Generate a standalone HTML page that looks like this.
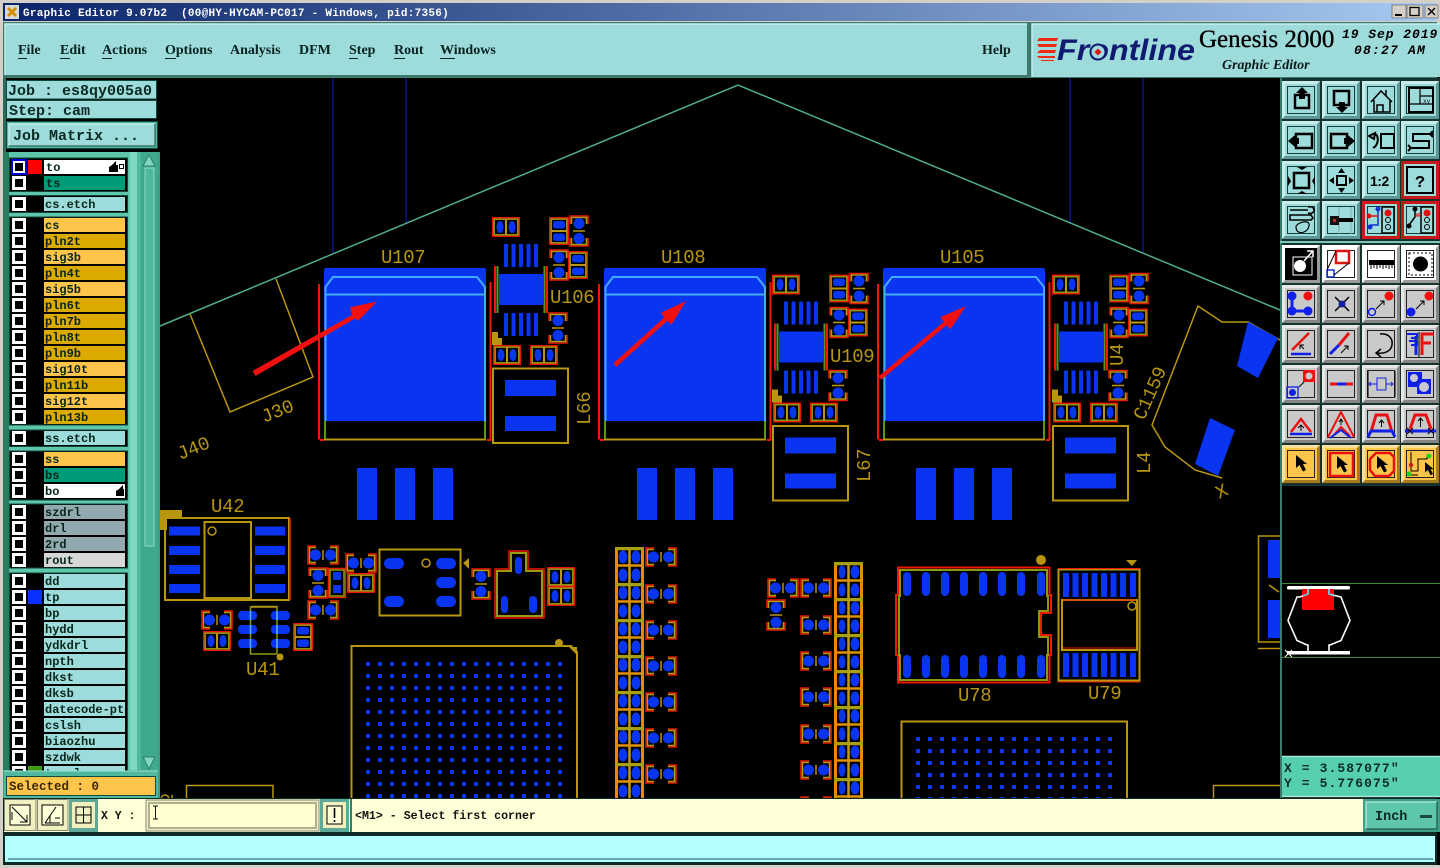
<!DOCTYPE html>
<html lang="en"><head><meta charset="utf-8"><title>Graphic Editor</title>
<style>
html,body{margin:0;padding:0;width:1440px;height:868px;overflow:hidden;background:#000}
svg{display:block}
.l{font:bold 12px "Liberation Mono",monospace;fill:#05261c}
.m{font:bold 14px "Liberation Serif",serif;fill:#06231f}
.j{font:bold 15px "Liberation Mono",monospace;fill:#0a2a24}
.g{font:19px "Liberation Mono",monospace;fill:#b8960f;letter-spacing:-.3px}
</style></head><body>
<svg xmlns="http://www.w3.org/2000/svg" width="1440" height="868" viewBox="0 0 1440 868">
<defs>
<linearGradient id="tg" x1="0" x2="1" y1="0" y2="0"><stop offset="0" stop-color="#0a246a"/><stop offset="1" stop-color="#a6caf0"/></linearGradient>
<pattern id="bga" patternUnits="userSpaceOnUse" x="366" y="662" width="12" height="12"><rect width="4" height="4" fill="#0a35f0"/></pattern>
<pattern id="bgb" patternUnits="userSpaceOnUse" x="916" y="737" width="12" height="12"><rect width="4" height="4" fill="#0a35f0"/></pattern>
<pattern id="lad1" patternUnits="userSpaceOnUse" x="615" y="547" width="29" height="36">
<rect width="29" height="36" fill="#000"/>
<path d="M1.500 0V36M27.500 0V36" stroke="#e88a00" stroke-width="3"/><path d="M14.500 0V36" stroke="#c09a10" stroke-width="2.500"/>
<path d="M0 1.500H29" stroke="#a8a010" stroke-width="3.500"/><path d="M0 18.500H29" stroke="#e09000" stroke-width="2.500"/>
<ellipse cx="8" cy="10" rx="4.500" ry="6.500" fill="#0a35f0"/><ellipse cx="21" cy="10" rx="4.500" ry="6.500" fill="#0a35f0"/>
<ellipse cx="8" cy="28" rx="4.500" ry="6.500" fill="#0a35f0"/><ellipse cx="21" cy="28" rx="4.500" ry="6.500" fill="#0a35f0"/></pattern>
<pattern id="lad2" patternUnits="userSpaceOnUse" x="834" y="562" width="29" height="36">
<rect width="29" height="36" fill="#000"/>
<path d="M1.500 0V36M27.500 0V36" stroke="#e88a00" stroke-width="3"/><path d="M14.500 0V36" stroke="#c09a10" stroke-width="2.500"/>
<path d="M0 1.500H29" stroke="#a8a010" stroke-width="3.500"/><path d="M0 18.500H29" stroke="#e09000" stroke-width="2.500"/>
<ellipse cx="8" cy="10" rx="3.500" ry="6.500" fill="#0a35f0"/><ellipse cx="21" cy="10" rx="4.500" ry="6.500" fill="#0a35f0"/>
<ellipse cx="8" cy="28" rx="3.500" ry="6.500" fill="#0a35f0"/><ellipse cx="21" cy="28" rx="4.500" ry="6.500" fill="#0a35f0"/></pattern>

<g id="capH"><path d="M9 1H1V19H9M23 1H31V19H23" fill="none" stroke="#f01800" stroke-width="1.500"/><path d="M9 2.500H2.500V17.500H9M23 2.500H29.500V17.500H23" fill="none" stroke="#b09a10" stroke-width="1.500"/><circle cx="8.500" cy="10" r="5.500" fill="#0a35f0"/><circle cx="23.500" cy="10" r="5.500" fill="#0a35f0"/><path d="M16 5V15" stroke="#b8960f" stroke-width="1.500"/></g>
<g id="capV"><path d="M1 9V1H19V9M1 23V31H19V23" fill="none" stroke="#f01800" stroke-width="1.500"/><path d="M2.500 9V2.500H17.500V9M2.500 23V29.500H17.500V23" fill="none" stroke="#b09a10" stroke-width="1.500"/><circle cx="10" cy="8.500" r="5.500" fill="#0a35f0"/><circle cx="10" cy="23.500" r="5.500" fill="#0a35f0"/><path d="M4 16H16" stroke="#b8960f" stroke-width="1.500"/></g>
<g id="chipH"><rect x=".8" y=".8" width="26.400" height="18.400" fill="#000" stroke="#f01800" stroke-width="1.500"/><rect x="2.200" y="2.200" width="23.600" height="15.600" fill="none" stroke="#8a9a10" stroke-width="1.500"/><path d="M14 2V18" stroke="#b8960f" stroke-width="2"/><ellipse cx="8" cy="10" rx="3.500" ry="6" fill="#0a35f0"/><ellipse cx="20" cy="10" rx="3.500" ry="6" fill="#0a35f0"/></g>
<g id="chipV"><rect x=".8" y=".8" width="18.400" height="26.400" fill="#000" stroke="#f01800" stroke-width="1.500"/><rect x="2.200" y="2.200" width="15.600" height="23.600" fill="none" stroke="#8a9a10" stroke-width="1.500"/><path d="M2 14H18" stroke="#b8960f" stroke-width="2"/><rect x="4" y="4" width="12" height="7.500" rx="2.500" fill="#0a35f0"/><rect x="4" y="16.500" width="12" height="7.500" rx="2.500" fill="#0a35f0"/></g>

<g id="mod">
<rect x="324" y="268" width="162" height="153" fill="#0a35f0" rx="2"/>
<path d="M325.500 421V287L333 277H477L485 287V421M325 294.500H485" fill="none" stroke="#44aaff" stroke-width="2"/>
<path d="M325 421V439M485 421V439" stroke="#5a9a10" stroke-width="2"/>
<path d="M324 439.500H486" stroke="#b8960f" stroke-width="2"/>
<path d="M319 439.500V284M320 440H324M490.500 440V282M487 440H491" fill="none" stroke="#f01800" stroke-width="2"/>
<rect x="357" y="468" width="20" height="52" fill="#0a35f0"/><rect x="395" y="468" width="20" height="52" fill="#0a35f0"/><rect x="433" y="468" width="20" height="52" fill="#0a35f0"/>
</g>

<g id="grp">
<use href="#chipH" x="492" y="217"/>
<use href="#chipV" x="549" y="217"/>
<use href="#capV" x="569" y="215"/>
<use href="#capV" x="549" y="249"/>
<use href="#chipV" x="568" y="251"/>
<use href="#capV" x="548" y="312"/>
<path d="M506 244V267M513.500 244V267M521 244V267M528.500 244V267M536 244V267M506 313V336M513.500 313V336M521 313V336M528.500 313V336M536 313V336" stroke="#0a35f0" stroke-width="4"/>
<rect x="499" y="274" width="44" height="31" fill="#0a35f0"/>
<path d="M495 266V313M547 266V313" stroke="#f01800" stroke-width="2"/>
<path d="M497.500 266V313M544.500 266V313" stroke="#5a9a10" stroke-width="2"/>
<path d="M492 332H498V338H502V345H492Z" fill="#b8960f"/>
<use href="#chipH" x="493" y="345"/><use href="#chipH" x="530" y="345"/>
<rect x="493" y="368.500" width="75" height="74.500" fill="none" stroke="#b8960f" stroke-width="2"/>
<rect x="505" y="380" width="51" height="16" fill="#0a35f0"/><rect x="505" y="416" width="51" height="15" fill="#0a35f0"/>
</g>

<g id="c"><rect x="13.500" y="1.500" width="11" height="11" fill="#000" stroke="#fff" stroke-width="3"/></g>
<g id="ar"><path d="M0 0V13L3.500 10L7 16.500L10 15L7 9H11Z" fill="#000"/></g>

<g id="bt"><rect width="38" height="38" fill="#9edbdb"/><path d="M0 38V0H38L35 3H3V35Z" fill="#c8ecec"/><path d="M38 0V38H0L3 35H35V3Z" fill="#5b9797"/><rect x="5.500" y="5.500" width="27" height="27" fill="none" stroke="#14403c"/></g>
<g id="bg"><rect width="38" height="38" fill="#c9c9c9"/><path d="M0 38V0H38L35 3H3V35Z" fill="#e8e8e8"/><path d="M38 0V38H0L3 35H35V3Z" fill="#858585"/><rect x="5.500" y="5.500" width="27" height="27" fill="none" stroke="#222"/></g>
<g id="bw"><rect width="38" height="38" fill="#fff"/><path d="M38 0V38H0L3 35H35V3Z" fill="#9a9a9a"/><rect x="5.500" y="5.500" width="27" height="27" fill="none" stroke="#222"/></g>
<g id="bo"><rect width="38" height="38" fill="#ffc44a"/><path d="M0 38V0H38L35 3H3V35Z" fill="#ffe09a"/><path d="M38 0V38H0L3 35H35V3Z" fill="#a87a20"/><rect x="5.500" y="5.500" width="27" height="27" fill="none" stroke="#222"/></g>
</defs>

<!-- canvas -->
<rect width="1440" height="868" fill="#000"/>
<path d="M333 78V253M406 78V223M1070 78V223M1143 78V253" stroke="#0a20c8" stroke-width="1"/>
<path d="M160 326L738 85L1280 310" fill="none" stroke="#4fae86" stroke-width="1.500"/>
<path d="M190 314L230 412L313 377L276 279" fill="none" stroke="#b8960f" stroke-width="1.500"/>

<use href="#mod"/><use href="#mod" x="280"/><use href="#mod" x="559"/>
<use href="#grp"/><use href="#grp" x="280" y="57.500"/><use href="#grp" x="560" y="57.500"/>

<text class="g" x="381" y="263">U107</text><text class="g" x="661" y="263">U108</text><text class="g" x="940" y="263">U105</text>
<text class="g" x="550" y="303">U106</text><text class="g" x="830" y="362">U109</text>
<text class="g" transform="translate(1123,366) rotate(-90)">U4</text>
<text class="g" transform="translate(590,425) rotate(-90)">L66</text>
<text class="g" transform="translate(870,482) rotate(-90)">L67</text>
<text class="g" transform="translate(1150,474) rotate(-90)">L4</text>
<text class="g" transform="translate(264,423) rotate(-22)">J30</text>
<text class="g" transform="translate(180,460) rotate(-22)">J40</text>
<text class="g" transform="translate(1144,421) rotate(-66)">C1159</text>
<text class="g" transform="translate(1219,499) rotate(-25)">X</text>

<!-- red arrows -->
<g fill="#f01010">
<path d="M252.500 371L352 315L350 307.300L377 301.500L358.300 320.700L355 318.500L255.500 376Z"/>
<path d="M613.500 363.300L664.500 317.300L660.600 313L686 301L671.400 325L667.500 320.700L616.500 366.700Z"/>
<path d="M878.600 376.300L943.900 321.700L940.200 317.300L966 306L950.400 329.500L946.700 325.100L881.400 379.700Z"/>
</g>

<!-- right component -->
<path d="M1280 340L1248 322L1222 322L1198 306L1152 425L1165 447L1195 470L1222 478" fill="none" stroke="#b8960f" stroke-width="1.500"/>
<path d="M1248 322L1278 338L1258 378L1237 366Z" fill="#0a35f0"/>
<path d="M1210 418L1235 430L1218 476L1195 464Z" fill="#0a35f0"/>

<!-- U42 -->
<path d="M160 510H182V517H167V530H160Z" fill="#b8960f"/>
<rect x="165" y="518" width="124" height="82" fill="none" stroke="#b8960f" stroke-width="2"/><path d="M290 518V600" stroke="#f01800" stroke-width="1.500"/>
<rect x="204.500" y="522" width="46.500" height="76" fill="none" stroke="#b8960f" stroke-width="2"/>
<circle cx="212" cy="531" r="4" fill="none" stroke="#b8960f" stroke-width="1.500"/>
<path d="M169 531H200M169 550.500H200M169 569.500H200M169 588.500H200M255 531H285M255 550.500H285M255 569.500H285M255 588.500H285" stroke="#0a35f0" stroke-width="9"/>
<text class="g" x="211" y="512">U42</text>
<use href="#capH" x="307" y="545"/><use href="#capH" x="307" y="600"/><use href="#capH" x="345" y="553"/>
<use href="#capV" x="308" y="567"/>
<rect x="328.500" y="568.500" width="17" height="29" fill="#000" stroke="#f01800" stroke-width="1.500"/><rect x="330" y="570" width="14" height="26" fill="none" stroke="#8a9a10" stroke-width="1.500"/>
<rect x="333" y="572" width="8" height="8" fill="#0a35f0"/><rect x="333" y="585" width="8" height="8" fill="#0a35f0"/>
<use href="#chipH" x="347" y="573"/>
<rect x="379.500" y="549.500" width="81" height="66" fill="none" stroke="#b8960f" stroke-width="2"/>
<rect x="384" y="558" width="20" height="11" rx="5.500" fill="#0a35f0"/><rect x="384" y="596" width="20" height="11" rx="5.500" fill="#0a35f0"/>
<rect x="436" y="558" width="20" height="11" rx="5.500" fill="#0a35f0"/><rect x="436" y="577" width="20" height="11" rx="5.500" fill="#0a35f0"/><rect x="436" y="596" width="20" height="11" rx="5.500" fill="#0a35f0"/>
<circle cx="426" cy="563" r="4" fill="none" stroke="#b8960f" stroke-width="1.500"/>
<path d="M463 563L469 558V569Z" fill="#b8960f"/>
<use href="#capV" x="471" y="568"/>
<path d="M509 551H528V569H544V618H495V569H509Z" fill="none" stroke="#f01800" stroke-width="1.500"/>
<path d="M511 553H526V571H542V616H497V571H511Z" fill="none" stroke="#9a9a10" stroke-width="2"/>
<rect x="515" y="557" width="7" height="17" rx="3.500" fill="#0a35f0"/><rect x="501" y="596" width="7" height="17" rx="3.500" fill="#0a35f0"/><rect x="529" y="596" width="8" height="17" rx="4" fill="#0a35f0"/>
<use href="#chipH" x="547" y="567"/><use href="#chipH" x="547" y="586"/>
<!-- U41 -->
<use href="#capH" x="201" y="610"/><use href="#chipH" x="203" y="631"/>
<rect x="238" y="611" width="19" height="9" rx="4" fill="#0a35f0"/><rect x="238" y="625" width="19" height="9" rx="4" fill="#0a35f0"/><rect x="238" y="639" width="19" height="9" rx="4" fill="#0a35f0"/>
<rect x="271" y="611" width="19" height="9" rx="4" fill="#0a35f0"/><rect x="271" y="625" width="19" height="9" rx="4" fill="#0a35f0"/><rect x="271" y="639" width="19" height="9" rx="4" fill="#0a35f0"/>
<path d="M250.500 606.500V654H277V606.500H250.500" fill="none" stroke="#8a9a10" stroke-width="1.500"/>
<path d="M251 607H277" stroke="#b8960f" stroke-width="1.500"/>
<path d="M250.500 611V620M250.500 625V634M250.500 639V648M277 611V620M277 625V634M277 639V648" stroke="#44aaff" stroke-width="1.500"/>
<circle cx="280" cy="657" r="3.500" fill="#b8960f"/>
<text class="g" x="246" y="675">U41</text>
<use href="#chipV" x="293" y="623"/>

<!-- BGA 1 -->
<path d="M351.500 800V646H571L577 652V800" fill="none" stroke="#b8960f" stroke-width="2"/>
<path d="M569 647H577V655Z" fill="#b8960f"/>
<circle cx="559" cy="643" r="4" fill="#b8960f"/>
<rect x="366" y="662" width="204" height="136" fill="url(#bga)"/>
<path d="M186.500 800V785.500H273V800" fill="none" stroke="#b8960f" stroke-width="1.500"/>
<path d="M161 798C163 794 167 794 169 798M172 795V798" fill="none" stroke="#b8960f" stroke-width="1.500"/>

<!-- ladders -->
<rect x="615" y="547" width="29" height="251" fill="url(#lad1)"/>
<rect x="834" y="562" width="29" height="236" fill="url(#lad2)"/>
<use href="#capH" x="645" y="547"/><use href="#capH" x="645" y="584"/><use href="#capH" x="645" y="620"/><use href="#capH" x="645" y="656"/><use href="#capH" x="645" y="692"/><use href="#capH" x="645" y="728"/><use href="#capH" x="645" y="764"/>
<use href="#capH" x="767" y="578"/><use href="#capH" x="800" y="578"/><use href="#capV" x="766" y="599"/>
<use href="#capH" x="800" y="615"/><use href="#capH" x="800" y="651"/><use href="#capH" x="800" y="687"/><use href="#capH" x="800" y="724"/><use href="#capH" x="800" y="760"/><use href="#capH" x="800" y="796"/>

<!-- U78 -->
<path d="M898 595V567.500H1049.500V595H1051V613H1041V635H1051V655H1049.500V682.500H898V655H896V595Z" fill="none" stroke="#f01800" stroke-width="2"/>
<path d="M900 596V570H1047V596H1048V611H1039V637H1048V655H1047V680H900V655H899V596Z" fill="none" stroke="#8a9a10" stroke-width="2"/>
<g fill="#0a35f0"><rect x="903" y="572" width="8" height="24" rx="4"/><rect x="922" y="572" width="8" height="24" rx="4"/><rect x="941" y="572" width="8" height="24" rx="4"/><rect x="960" y="572" width="8" height="24" rx="4"/><rect x="979" y="572" width="8" height="24" rx="4"/><rect x="998" y="572" width="8" height="24" rx="4"/><rect x="1017" y="572" width="8" height="24" rx="4"/><rect x="1037" y="572" width="8" height="24" rx="4"/>
<rect x="903" y="655" width="8" height="23" rx="4"/><rect x="922" y="655" width="8" height="23" rx="4"/><rect x="941" y="655" width="8" height="23" rx="4"/><rect x="960" y="655" width="8" height="23" rx="4"/><rect x="979" y="655" width="8" height="23" rx="4"/><rect x="998" y="655" width="8" height="23" rx="4"/><rect x="1017" y="655" width="8" height="23" rx="4"/><rect x="1037" y="655" width="8" height="23" rx="4"/></g>
<circle cx="1041" cy="560" r="5" fill="#b8960f"/>
<text class="g" x="958" y="701">U78</text>
<!-- U79 -->
<rect x="1058.500" y="569.500" width="81" height="111" fill="none" stroke="#b8960f" stroke-width="2"/>
<path d="M1058 568.500H1140M1058 682H1140" stroke="#f01800"/>
<path d="M1066 573V597M1075.500 573V597M1085 573V597M1094.500 573V597M1104 573V597M1113.500 573V597M1123 573V597M1133 573V597M1066 653V677M1075.500 653V677M1085 653V677M1094.500 653V677M1104 653V677M1113.500 653V677M1123 653V677M1133 653V677" stroke="#0a35f0" stroke-width="6"/>
<rect x="1062" y="600" width="75" height="50" fill="none" stroke="#b8960f" stroke-width="2"/>
<path d="M1063 600H1136M1063 648H1136" stroke="#f01800"/>
<circle cx="1132" cy="606" r="4" fill="none" stroke="#b8960f" stroke-width="1.500"/>
<path d="M1126 560H1137L1132 566Z" fill="#b8960f"/>
<text class="g" x="1088" y="699">U79</text>
<!-- BGA 2 -->
<path d="M901.500 800V721.500H1127V800" fill="none" stroke="#b8960f" stroke-width="2"/>
<rect x="916" y="737" width="204" height="61" fill="url(#bgb)"/>
<!-- far right -->
<path d="M1280 536H1258.500V642H1280" fill="none" stroke="#b8960f" stroke-width="1.500"/>
<rect x="1268" y="540" width="12" height="38" fill="#0a35f0"/><rect x="1268" y="600" width="12" height="38" fill="#0a35f0"/>
<path d="M1258 648.500H1280M1269 585L1279 592" stroke="#b8960f" stroke-width="1.500"/>
<path d="M1213.500 800V785.500H1280" fill="none" stroke="#b8960f" stroke-width="1.500"/>

<!-- title bar / frame -->
<rect width="1440" height="24" fill="#d4d0c8"/>
<rect x="0" y="0" width="3" height="868" fill="#d4d0c8"/>
<rect x="3" y="3" width="1434" height="18" fill="url(#tg)"/>
<rect x="5" y="5" width="14" height="14" fill="#d8d8d8"/><path d="M8 8L16 16M16 8L8 16" stroke="#d89000" stroke-width="3"/>
<text x="23" y="16" style="font:bold 11px 'Liberation Mono',monospace;fill:#fff;letter-spacing:.27px" xml:space="preserve">Graphic Editor 9.07b2  (00@HY-HYCAM-PC017 - Windows, pid:7356)</text>
<g><rect x="1392" y="5" width="14" height="13" fill="#d4d0c8" stroke="#555" stroke-width=".6"/><rect x="1395" y="14" width="7" height="2" fill="#000"/>
<rect x="1407" y="5" width="16" height="13" fill="#d4d0c8" stroke="#555" stroke-width=".6"/><rect x="1410" y="7.500" width="9" height="8" fill="none" stroke="#000" stroke-width="1.300"/>
<rect x="1425" y="5" width="13" height="13" fill="#d4d0c8" stroke="#555" stroke-width=".6"/><path d="M1428 8L1435 15M1435 8L1428 15" stroke="#000" stroke-width="1.400"/></g>

<!-- menu bar -->
<rect x="3" y="22" width="1434" height="56" fill="#3b7a6c"/>
<rect x="5" y="24" width="1022" height="51" fill="#9edbdb"/>
<path d="M5 75V24H1027" fill="none" stroke="#c6eeee" stroke-width="1.500"/>
<rect x="1032" y="24" width="408" height="53" fill="#9edbdb"/>
<path d="M1032 77V24H1440" fill="none" stroke="#c6eeee" stroke-width="1.500"/>
<text class="m" x="18" y="54">File</text><rect x="18" y="58" width="9" height="1" fill="#06231f"/>
<text class="m" x="60" y="54">Edit</text><rect x="60" y="58" width="10" height="1" fill="#06231f"/>
<text class="m" x="102" y="54">Actions</text><rect x="102" y="58" width="10" height="1" fill="#06231f"/>
<text class="m" x="165" y="54">Options</text><rect x="165" y="58" width="11" height="1" fill="#06231f"/>
<text class="m" x="230" y="54">Analysis</text>
<text class="m" x="299" y="54">DFM</text>
<text class="m" x="349" y="54">Step</text><rect x="349" y="58" width="9" height="1" fill="#06231f"/>
<text class="m" x="394" y="54">Rout</text><rect x="394" y="58" width="11" height="1" fill="#06231f"/>
<text class="m" x="440" y="54">Windows</text><rect x="440" y="58" width="15" height="1" fill="#06231f"/>
<text class="m" x="982" y="54">Help</text>

<!-- logo -->
<g fill="#ee2a10"><path d="M1039 38H1058L1057 41H1037Z"/><path d="M1037 44H1057L1056 47H1039Z"/><path d="M1040 50H1056L1055 53H1037Z"/><path d="M1037 56H1055V58H1039Z"/><path d="M1041 60H1054V61H1041Z"/></g>
<text x="1057" y="60" textLength="138" lengthAdjust="spacingAndGlyphs" style="font:italic bold 30px 'Liberation Sans',sans-serif;fill:#101a70">Frontline</text>
<circle cx="1098" cy="52" r="7.500" fill="#9edbdb" stroke="#101a70" stroke-width="2"/><path d="M1098 48.500L1101.500 52L1098 55.500L1094.500 52Z" fill="#e01010"/>
<text x="1199" y="47" style="font:25px 'Liberation Serif',serif;fill:#000;stroke:#000;stroke-width:.35">Genesis 2000</text>
<text x="1222" y="69" style="font:italic bold 14px 'Liberation Serif',serif;fill:#0a1a1a">Graphic Editor</text>
<text x="1342" y="38" xml:space="preserve" style="font:italic bold 13px 'Liberation Mono',monospace;fill:#000;letter-spacing:.95px">19 Sep 2019</text>
<text x="1354" y="54" style="font:italic bold 13px 'Liberation Mono',monospace;fill:#000;letter-spacing:1.200px">08:27 AM</text>

<!-- left panel -->
<rect x="3" y="78" width="157" height="74" fill="#000"/>
<rect x="3" y="78" width="3" height="74" fill="#2a6a5c"/>
<rect x="6.500" y="80.500" width="150" height="18.500" fill="#9edbdb" stroke="#0f4a3c"/>
<text class="j" x="8" y="95" xml:space="preserve">Job : es8qy005a0</text>
<rect x="6.500" y="100.500" width="150" height="18" fill="#9edbdb" stroke="#0f4a3c"/>
<text class="j" x="9" y="115">Step: cam</text>
<rect x="6.500" y="121.500" width="151" height="27" fill="#4fb89e" stroke="#0f4a3c"/>
<rect x="9" y="124" width="146" height="22" fill="#9edbdb"/><path d="M9 146V124H155" fill="none" stroke="#c6eeee" stroke-width="1.500"/><path d="M155 124V146H9" fill="none" stroke="#3b7a6c" stroke-width="1.500"/>
<text class="j" x="13" y="140">Job Matrix ...</text>

<rect x="3" y="152" width="157" height="648" fill="#3f9e86"/>
<rect x="3" y="152" width="6" height="618" fill="#2a7a62"/>
<rect x="9" y="152" width="121" height="618" fill="#5ec6aa"/>
<rect x="130" y="152" width="7" height="618" fill="#7fd8c0"/>
<rect x="137" y="152" width="4" height="618" fill="#4fb89e"/>
<rect x="141" y="152" width="17" height="618" fill="#3fa88e"/>
<rect x="145" y="168" width="9" height="378" fill="#4fb89e" stroke="#9fe6d4" stroke-width=".8"/>
<path d="M149 155L155 166H143Z" fill="#7fd8c0" stroke="#2f7f6c"/><path d="M149 769L143 757H155Z" fill="#7fd8c0" stroke="#2f7f6c"/>

<g fill="#000" stroke="#0f4a3c" stroke-width="1">
<rect x="9.500" y="158" width="118" height="33.500"/><rect x="9.500" y="195.500" width="118" height="17"/><rect x="9.500" y="217" width="118" height="208"/><rect x="9.500" y="430" width="118" height="16.500"/><rect x="9.500" y="451" width="118" height="49"/><rect x="9.500" y="504" width="118" height="64"/><rect x="9.500" y="573" width="118" height="200"/>
</g>
<use href="#c" y="160"/><use href="#c" y="176"/><use href="#c" y="197"/><use href="#c" y="218"/><use href="#c" y="234"/><use href="#c" y="250"/><use href="#c" y="266"/><use href="#c" y="282"/><use href="#c" y="298"/><use href="#c" y="314"/><use href="#c" y="330"/><use href="#c" y="346"/><use href="#c" y="362"/><use href="#c" y="378"/><use href="#c" y="394"/><use href="#c" y="410"/><use href="#c" y="431"/><use href="#c" y="452"/><use href="#c" y="468"/><use href="#c" y="484"/><use href="#c" y="505"/><use href="#c" y="521"/><use href="#c" y="537"/><use href="#c" y="553"/><use href="#c" y="574"/><use href="#c" y="590"/><use href="#c" y="606"/><use href="#c" y="622"/><use href="#c" y="638"/><use href="#c" y="654"/><use href="#c" y="670"/><use href="#c" y="686"/><use href="#c" y="702"/><use href="#c" y="718"/><use href="#c" y="734"/><use href="#c" y="750"/><use href="#c" y="766"/>
<rect x="12" y="160" width="14" height="14" fill="none" stroke="#0000d8" stroke-width="2"/>
<rect x="28" y="160" width="14" height="14" fill="#ff0000"/>
<rect x="28" y="590" width="14" height="14" fill="#0a30ff"/>
<rect x="28" y="766" width="14" height="14" fill="#3f9a10"/>

<rect x="44" y="160" width="81" height="14" fill="#fff"/><text class="l" x="46" y="171">to</text>
<path d="M109 172L109 167L112 165L116 161L116 165H118V172Z" fill="#000"/><rect x="119.500" y="164.500" width="4" height="4" fill="#fff" stroke="#000"/>
<rect x="44" y="176" width="81" height="14" fill="#009b77"/><text class="l" x="46" y="187">ts</text>
<rect x="44" y="197" width="81" height="14" fill="#9edbdb"/><text class="l" x="45" y="208">cs.etch</text>

<rect x="44" y="218" width="81" height="14" fill="#ffc44a"/><text class="l" x="45" y="229">cs</text>
<rect x="44" y="234" width="81" height="14" fill="#dcaa00"/><text class="l" x="45" y="245">pln2t</text>
<rect x="44" y="250" width="81" height="14" fill="#ffc44a"/><text class="l" x="45" y="261">sig3b</text>
<rect x="44" y="266" width="81" height="14" fill="#dcaa00"/><text class="l" x="45" y="277">pln4t</text>
<rect x="44" y="282" width="81" height="14" fill="#ffc44a"/><text class="l" x="45" y="293">sig5b</text>
<rect x="44" y="298" width="81" height="14" fill="#dcaa00"/><text class="l" x="45" y="309">pln6t</text>
<rect x="44" y="314" width="81" height="14" fill="#dcaa00"/><text class="l" x="45" y="325">pln7b</text>
<rect x="44" y="330" width="81" height="14" fill="#dcaa00"/><text class="l" x="45" y="341">pln8t</text>
<rect x="44" y="346" width="81" height="14" fill="#dcaa00"/><text class="l" x="45" y="357">pln9b</text>
<rect x="44" y="362" width="81" height="14" fill="#ffc44a"/><text class="l" x="45" y="373">sig10t</text>
<rect x="44" y="378" width="81" height="14" fill="#dcaa00"/><text class="l" x="45" y="389">pln11b</text>
<rect x="44" y="394" width="81" height="14" fill="#ffc44a"/><text class="l" x="45" y="405">sig12t</text>
<rect x="44" y="410" width="81" height="14" fill="#dcaa00"/><text class="l" x="45" y="421">pln13b</text>

<rect x="44" y="431" width="81" height="14" fill="#9edbdb"/><text class="l" x="45" y="442">ss.etch</text>
<rect x="44" y="452" width="81" height="14" fill="#ffc44a"/><text class="l" x="45" y="463">ss</text>
<rect x="44" y="468" width="81" height="14" fill="#009b77"/><text class="l" x="45" y="479">bs</text>
<rect x="44" y="484" width="81" height="14" fill="#fff"/><text class="l" x="45" y="495">bo</text>
<path d="M116 496V491L119 489L123 485V489H124V496Z" fill="#000"/>

<rect x="44" y="505" width="81" height="14" fill="#94a8b0"/><text class="l" x="45" y="516">szdrl</text>
<rect x="44" y="521" width="81" height="14" fill="#94a8b0"/><text class="l" x="45" y="532">drl</text>
<rect x="44" y="537" width="81" height="14" fill="#94a8b0"/><text class="l" x="45" y="548">2rd</text>
<rect x="44" y="553" width="81" height="14" fill="#d8d8d8"/><text class="l" x="45" y="564">rout</text>

<rect x="44" y="574" width="81" height="14" fill="#9edbdb"/><text class="l" x="45" y="585">dd</text>
<rect x="44" y="590" width="81" height="14" fill="#9edbdb"/><text class="l" x="45" y="601">tp</text>
<rect x="44" y="606" width="81" height="14" fill="#9edbdb"/><text class="l" x="45" y="617">bp</text>
<rect x="44" y="622" width="81" height="14" fill="#9edbdb"/><text class="l" x="45" y="633">hydd</text>
<rect x="44" y="638" width="81" height="14" fill="#9edbdb"/><text class="l" x="45" y="649">ydkdrl</text>
<rect x="44" y="654" width="81" height="14" fill="#9edbdb"/><text class="l" x="45" y="665">npth</text>
<rect x="44" y="670" width="81" height="14" fill="#9edbdb"/><text class="l" x="45" y="681">dkst</text>
<rect x="44" y="686" width="81" height="14" fill="#9edbdb"/><text class="l" x="45" y="697">dksb</text>
<rect x="44" y="702" width="81" height="14" fill="#9edbdb"/><svg x="44" y="702" width="81" height="14"><text class="l" x="1" y="11">datecode-ptc</text></svg>
<rect x="44" y="718" width="81" height="14" fill="#9edbdb"/><text class="l" x="45" y="729">cslsh</text>
<rect x="44" y="734" width="81" height="14" fill="#9edbdb"/><text class="l" x="45" y="745">biaozhu</text>
<rect x="44" y="750" width="81" height="14" fill="#9edbdb"/><text class="l" x="45" y="761">szdwk</text>
<rect x="44" y="766" width="81" height="14" fill="#9edbdb"/><text class="l" x="45" y="777">tmcsl</text>

<!-- selected -->
<rect x="4" y="771" width="154" height="28" fill="#4fb89e"/><path d="M4 771H158" stroke="#9fe6d4"/>
<rect x="6.500" y="776.500" width="149" height="19" fill="#ffc44a" stroke="#0f4a3c"/>
<text x="9" y="790" style="font:bold 12.500px 'Liberation Mono',monospace;fill:#3a2800" xml:space="preserve">Selected : 0</text>

<!-- bottom rows -->
<rect x="3" y="798" width="1434" height="35" fill="#0c2a26"/>
<rect x="4" y="799" width="1359" height="33" fill="#ffffd8"/>
<rect x="1363" y="799" width="77" height="33" fill="#3f9e86"/>
<rect x="4.500" y="799.500" width="31.500" height="31" fill="#f0f0c0" stroke="#888870"/>
<rect x="10" y="805" width="20" height="20" fill="#ffffd8" stroke="#000"/><path d="M12 807L27 822M27 815V822H20M12 812V820" fill="none" stroke="#000"/>
<rect x="37.500" y="799.500" width="30.500" height="31" fill="#f0f0c0" stroke="#888870"/>
<rect x="42" y="805" width="21" height="20" fill="#ffffd8" stroke="#000"/><path d="M45 823L56 807M45 823H60M50 815V823M55 818H60" fill="none" stroke="#000"/>
<rect x="69" y="799" width="29" height="33" fill="#5fa898"/>
<rect x="72" y="802" width="23" height="26" fill="#f0f0c0"/>
<rect x="76" y="807" width="15" height="16" fill="none" stroke="#000"/><path d="M83.500 807V823M76 815H91" stroke="#000"/>
<text x="101" y="819" style="font:bold 11.500px 'Liberation Mono',monospace;fill:#111" xml:space="preserve">X Y :</text>
<rect x="146" y="800" width="173" height="31" fill="#f0f0c8" stroke="#888870"/>
<rect x="149" y="803" width="167" height="25" fill="#ffffd0" stroke="#b0b090" stroke-width="2"/>
<path d="M153 806H158M155.500 806V819M153 819H158" stroke="#111" fill="none"/>
<rect x="320" y="799" width="29" height="33" fill="#5fa898"/>
<rect x="323" y="802" width="23" height="26" fill="#f0f0c0"/><rect x="327" y="806" width="15" height="18" fill="#ffffd8" stroke="#000"/>
<path d="M334.500 808V818M334.500 820V822" stroke="#000" stroke-width="1.600"/>
<rect x="350" y="799" width="2" height="33" fill="#3b7a6c"/>
<text x="355" y="819" style="font:bold 11.600px 'Liberation Mono',monospace;fill:#111">&lt;M1&gt; - Select first corner</text>
<rect x="1366" y="802" width="71" height="27" fill="#5ec6aa"/><path d="M1366 829V802H1437" fill="none" stroke="#9fe6d4" stroke-width="1.500"/><path d="M1437 802V829H1366" fill="none" stroke="#2a6a5c" stroke-width="1.500"/>
<text x="1375" y="820" style="font:bold 13.500px 'Liberation Mono',monospace;fill:#062a20">Inch</text>
<rect x="1420" y="815" width="12" height="3" fill="#1a4a40"/>
<rect x="3" y="833" width="1434" height="32" fill="#0c2a26"/>
<rect x="5" y="836" width="1430" height="26" fill="#b4ffff"/>
<path d="M8 859H1433" stroke="#4a8a88" stroke-width="1.500"/>
<rect x="0" y="865" width="1440" height="3" fill="#d4d0c8"/>

<!-- right tool panel -->
<rect x="1280" y="78" width="160" height="408" fill="#15322e"/>
<rect x="1280" y="78" width="2" height="720" fill="#3a7a6c"/>
<rect x="1280" y="241" width="160" height="2" fill="#7fc8b8"/>
<rect x="1282" y="486" width="158" height="270" fill="#000"/>
<path d="M1282 583.500H1440M1282 657.500H1440" stroke="#3f8a30" stroke-width="1"/>
<rect x="1287" y="586" width="63" height="3.500" rx="1.500" fill="#fff"/>
<rect x="1302" y="589" width="32" height="21" fill="#ff0000"/>
<rect x="1307" y="589" width="22" height="2" fill="#ff0000"/>
<path d="M1308 589V594L1300 597H1297L1288 620.500L1297 640.500L1307 645H1308V652.500M1329 652.500V645H1330L1341 640.500L1350 620.500L1341 597L1329 594V589" fill="none" stroke="#fff" stroke-width="1.600"/>
<path d="M1308 589V594L1303 596M1329 589V594L1334 596" fill="none" stroke="#4ec8d8" stroke-width="1.600"/>
<rect x="1287" y="651" width="63" height="3.500" fill="#fff"/>
<path d="M1285 650L1292 657M1292 650L1285 657" stroke="#fff"/>
<rect x="1282" y="756" width="158" height="41" fill="#56cfb0"/><path d="M1282 756.500H1440" stroke="#a8e8d8" stroke-width="1.500"/><path d="M1282 796.500H1440" stroke="#a8e8d8" stroke-width="1.500"/>
<text x="1284" y="772" xml:space="preserve" style="font:bold 13px 'Liberation Mono',monospace;fill:#0a2a24;letter-spacing:1.100px">X = 3.587077"</text>
<text x="1284" y="787" xml:space="preserve" style="font:bold 13px 'Liberation Mono',monospace;fill:#0a2a24;letter-spacing:1.100px">Y = 5.776075"</text>

<!-- toolbar row 1 -->
<g transform="translate(1282,81)"><use href="#bt"/><rect x="13" y="14" width="14" height="13" fill="none" stroke="#000" stroke-width="2.500"/><path d="M20 6L26 12H23V18H17V12H14Z"/></g>
<g transform="translate(1322,81)"><use href="#bt"/><rect x="12" y="10" width="15" height="14" fill="none" stroke="#000" stroke-width="2.500"/><path d="M20 32L26 26H23V21H17V26H14Z"/></g>
<g transform="translate(1362,81)"><use href="#bt"/><path d="M9 21L19 10L30 21M12 19V31H28V19M15 31V24H21V31M24 15V9" fill="none" stroke="#000" stroke-width="1.500"/></g>
<g transform="translate(1401,81)"><use href="#bt"/><rect x="8" y="7" width="24" height="24" fill="none" stroke="#000" stroke-width="2"/><path d="M8 23H32M19 7V23M19 15H32" fill="none" stroke="#000" stroke-width="1.200"/><text x="22" y="22" style="font:6px 'Liberation Mono',monospace">xy</text></g>
<!-- row 2 -->
<g transform="translate(1282,121)"><use href="#bt"/><rect x="14" y="13" width="16" height="14" fill="none" stroke="#000" stroke-width="2.500"/><path d="M6 20L13 14V17H17V23H13V26Z"/></g>
<g transform="translate(1322,121)"><use href="#bt"/><rect x="9" y="13" width="16" height="14" fill="none" stroke="#000" stroke-width="2.500"/><path d="M33 20L26 14V17H22V23H26V26Z"/></g>
<g transform="translate(1362,121)"><use href="#bt"/><rect x="19" y="13" width="13" height="14" fill="none" stroke="#000" stroke-width="2"/><path d="M13 13C17 14 17 24 11 27M7 15L13 12L12 18Z" fill="none" stroke="#000" stroke-width="2"/></g>
<g transform="translate(1401,121)"><use href="#bt"/><path d="M32 13H12V20H28V27H8M32 10L29 13L32 16M7 24L10 27L7 30" fill="none" stroke="#000" stroke-width="2"/></g>
<!-- row 3 -->
<g transform="translate(1282,161)"><use href="#bt"/><rect x="12" y="12" width="15" height="15" fill="none" stroke="#000" stroke-width="2.500"/><path d="M20 9L15 6H25ZM20 30L15 33H25ZM9 20L6 15V25ZM30 20L33 15V25Z"/></g>
<g transform="translate(1322,161)"><use href="#bt"/><rect x="15" y="15" width="9" height="9" fill="none" stroke="#000" stroke-width="2"/><path d="M19.500 7L16 12H23ZM19.500 32L16 27H23ZM7 19.500L12 16V23ZM32 19.500L27 16V23Z"/></g>
<g transform="translate(1362,161)"><use href="#bt"/><text x="8" y="25" style="font:bold 14px 'Liberation Sans',sans-serif;letter-spacing:-.5px">1:2</text></g>
<g transform="translate(1401,161)"><use href="#bt"/><rect x="1.500" y="1.500" width="35" height="35" fill="none" stroke="#c81818" stroke-width="3"/><rect x="6" y="6" width="26" height="26" fill="none" stroke="#000" stroke-width="2"/><text x="14" y="26" style="font:bold 17px 'Liberation Mono',monospace">?</text></g>
<!-- row 4 -->
<g transform="translate(1282,201)"><use href="#bt"/><path d="M8 9H26M26 6C30 5 32 7 32 9C32 12 29 13 26 12M8 14H29L31 17L29 19H8Z" fill="none" stroke="#000" stroke-width="1.600"/><path d="M14 26C14 23 21 20 25 21C29 22 27 29 22 31C17 33 14 30 14 26Z" fill="none" stroke="#000" stroke-width="1.200"/></g>
<g transform="translate(1322,201)"><use href="#bt"/><path d="M6 19H33M17 6V33M29 6V33" stroke="#7fa8a8"/><rect x="8" y="15" width="9" height="9" fill="#111"/><rect x="11" y="18" width="3" height="3" fill="#d02020"/><rect x="17" y="17" width="14" height="4" fill="#000"/></g>
<g transform="translate(1362,201)"><use href="#bt"/><rect x="1.500" y="1.500" width="35" height="35" fill="none" stroke="#c81818" stroke-width="3"/><rect x="20" y="6" width="12" height="26" fill="none" stroke="#000" stroke-width="1.500"/><circle cx="26" cy="12" r="3.500" fill="#e01010"/><circle cx="26" cy="19" r="2.500" fill="none" stroke="#000"/><circle cx="26" cy="26" r="2.500" fill="none" stroke="#000"/><path d="M16 8V24H8" stroke="#1030d0" stroke-width="1.500" fill="none"/><path d="M7 15H16" stroke="#e01010" stroke-width="1.500"/><circle cx="7" cy="15" r="2.500" fill="#e01010"/><circle cx="16" cy="8" r="2.500" fill="#1030d0"/><circle cx="8" cy="26" r="2.500" fill="#1030d0"/></g>
<g transform="translate(1401,201)"><use href="#bt"/><rect x="1.500" y="1.500" width="35" height="35" fill="none" stroke="#c81818" stroke-width="3"/><rect x="20" y="6" width="12" height="26" fill="none" stroke="#000" stroke-width="1.500"/><circle cx="26" cy="12" r="3.500" fill="#e01010"/><circle cx="26" cy="19" r="2.500" fill="none" stroke="#000"/><circle cx="26" cy="26" r="2.500" fill="none" stroke="#000"/><path d="M14 8V16L8 24" stroke="#000" stroke-width="1.500" fill="none"/><circle cx="14" cy="8" r="2.500"/><circle cx="8" cy="25" r="2.500"/><path d="M14 15H20M16 15V12M18 15V12" stroke="#e01010"/></g>

<!-- white row -->
<g transform="translate(1282,245)"><use href="#bw"/><rect x="3" y="3" width="32" height="32" fill="#000"/><rect x="11" y="12" width="19" height="18" fill="#000" stroke="#fff"/><circle cx="18" cy="21" r="6" fill="#fff"/><path d="M22 16L30 7M25 6H31V12" fill="none" stroke="#fff" stroke-width="1.500"/></g>
<g transform="translate(1322,245)"><use href="#bw"/><rect x="14" y="6" width="13" height="12" fill="none" stroke="#e01010" stroke-width="2.500"/><rect x="5" y="25" width="7" height="7" fill="none" stroke="#1030d0" stroke-width="1.500"/><path d="M5 25L14 6M12 30L27 18" stroke="#000"/></g>
<g transform="translate(1362,245)"><use href="#bw"/><rect x="7" y="15" width="25" height="5" fill="#000"/><path d="M9 20V24M12 20V23M15 20V24M18 20V23M21 20V24M24 20V23M27 20V24M30 20V23" stroke="#000"/></g>
<g transform="translate(1401,245)"><use href="#bw"/><rect x="8" y="8" width="23" height="22" fill="none" stroke="#000" stroke-dasharray="2 2"/><circle cx="19.500" cy="19" r="7.500" fill="#000"/></g>
<!-- gray rows -->
<g transform="translate(1282,285)"><use href="#bg"/><path d="M10 13V26H25" fill="none" stroke="#1020e8" stroke-width="3"/><circle cx="10" cy="11" r="4.500" fill="#1020e8"/><circle cx="10" cy="26" r="4.500" fill="#1020e8"/><circle cx="26" cy="26" r="4.500" fill="#1020e8"/><circle cx="26" cy="11" r="4.500" fill="#f01010"/></g>
<g transform="translate(1322,285)"><use href="#bg"/><path d="M13 12L27 26M27 12L13 26" stroke="#000" stroke-width="1.500"/><circle cx="20" cy="19" r="3.500" fill="#1020a8"/></g>
<g transform="translate(1362,285)"><use href="#bg"/><circle cx="10" cy="27" r="3.500" fill="none" stroke="#1020e8" stroke-width="1.500"/><circle cx="27" cy="11" r="4.500" fill="#f01010"/><path d="M14 24L22 16M18 16H22V20" fill="none" stroke="#000"/></g>
<g transform="translate(1401,285)"><use href="#bg"/><circle cx="10" cy="27" r="4.500" fill="#1020e8"/><circle cx="28" cy="11" r="4.500" fill="#f01010"/><path d="M15 24L23 16M19 16H23V20" fill="none" stroke="#000"/></g>
<g transform="translate(1282,325)"><use href="#bg"/><path d="M10 25L27 8" stroke="#e81010" stroke-width="2.500"/><path d="M9 29H29" stroke="#1020e8" stroke-width="2.500"/><path d="M22 24L18 20M18 24V20H22" stroke="#000" fill="none"/></g>
<g transform="translate(1322,325)"><use href="#bg"/><path d="M8 29L17 20" stroke="#1020e8" stroke-width="3"/><path d="M17 20L27 8" stroke="#e81010" stroke-width="3"/><path d="M19 28L26 21M22 21H26V25" stroke="#000" fill="none"/></g>
<g transform="translate(1362,325)"><use href="#bg"/><path d="M18 9C27 8 31 14 30 20C29 26 23 29 15 28M19 24L14 28L19 32" fill="none" stroke="#000" stroke-width="1.500"/></g>
<g transform="translate(1401,325)"><use href="#bg"/><path d="M6 9H16V13H10M8 16H16V20H10" fill="none" stroke="#1020e8" stroke-width="2"/><path d="M21 30V9H33M21 18H30" fill="none" stroke="#e81010" stroke-width="3"/><path d="M18 7V32" stroke="#000"/><path d="M15 11V30" stroke="#1020e8" stroke-width="3"/></g>
<g transform="translate(1282,365)"><use href="#bg"/><rect x="5" y="22" width="11" height="11" fill="none" stroke="#1020e8" stroke-width="1.300"/><circle cx="10.500" cy="27.500" r="3.500" fill="#1020e8"/><rect x="21" y="5" width="12" height="12" fill="#f01010"/><circle cx="27" cy="11" r="3.500" fill="#c9c9c9"/><path d="M17 22L22 17" stroke="#000"/></g>
<g transform="translate(1322,365)"><use href="#bg"/><path d="M8 19H15" stroke="#e81010" stroke-width="3"/><path d="M15 19H24" stroke="#1020e8" stroke-width="3"/><path d="M24 19H31" stroke="#e81010" stroke-width="3"/></g>
<g transform="translate(1362,365)"><use href="#bg"/><path d="M6 6V32M33 6V32" stroke="#000"/><path d="M8 19H31M9 17L7 19L9 21M29 17L31 19L29 21" stroke="#1020e8" fill="none"/><rect x="15" y="13" width="9" height="12" fill="#c9c9c9" stroke="#1020e8"/></g>
<g transform="translate(1401,365)"><use href="#bg"/><path d="M7 7H21V14H30V29H16V22H7Z" fill="#1020e8"/><circle cx="13" cy="13" r="4" fill="#c9c9c9"/><circle cx="23" cy="22" r="5" fill="#c9c9c9"/></g>
<g transform="translate(1282,405)"><use href="#bg"/><path d="M9 27L19 14L29 27" fill="none" stroke="#e81010" stroke-width="2.500"/><path d="M8 29H30" stroke="#1020e8" stroke-width="2.500"/><path d="M19 26V20M16 23L19 20L22 23" stroke="#000" fill="none"/></g>
<g transform="translate(1322,405)"><use href="#bg"/><path d="M6 32L19 7L32 32M11 31L19 22L28 31" fill="none" stroke="#e81010" stroke-width="2"/><path d="M8 33L19 25L29 33" fill="none" stroke="#1020e8" stroke-width="2"/><path d="M19 20V15M17 17L19 14L21 17" stroke="#000" fill="none"/></g>
<g transform="translate(1362,405)"><use href="#bg"/><path d="M9 27L14 10H25L30 27" fill="none" stroke="#e81010" stroke-width="3"/><path d="M6 32L9 26H30L33 32" fill="none" stroke="#1020e8" stroke-width="3"/><path d="M19.500 22V16M17 18L19.500 15L22 18" stroke="#000" fill="none"/></g>
<g transform="translate(1401,405)"><use href="#bg"/><path d="M9 24L14 10H25L30 24" fill="none" stroke="#e81010" stroke-width="3"/><path d="M4 26H35" stroke="#1020e8" stroke-width="3"/><path d="M6 23L12 29M12 23L6 29M27 23L33 29M33 23L27 29" stroke="#000"/><path d="M19.500 22V14M17 16L19.500 13L22 16" stroke="#000" fill="none"/></g>
<!-- orange -->
<g transform="translate(1282,445)"><use href="#bo"/><use href="#ar" x="14" y="10"/></g>
<g transform="translate(1322,445)"><use href="#bo"/><rect x="8" y="8" width="23" height="23" fill="none" stroke="#e81010" stroke-width="2.500"/><use href="#ar" x="15" y="11"/></g>
<g transform="translate(1362,445)"><use href="#bo"/><path d="M14 8H28L32 12V26L27 31H13L8 25V14Z" fill="none" stroke="#e81010" stroke-width="2.500"/><use href="#ar" x="15" y="11"/></g>
<g transform="translate(1401,445)"><use href="#bo"/><path d="M10 7V19M10 21V26H17V14H26V10M8 30H17" fill="none" stroke="#000" stroke-width="1"/><circle cx="10" cy="20" r="2.200" fill="#c02020"/><circle cx="8" cy="29" r="2.500" fill="#20d020"/><circle cx="28" cy="11" r="2.500" fill="#20d020"/><g transform="translate(24,17) scale(.8)"><use href="#ar"/></g></g>
</svg>
</body></html>
